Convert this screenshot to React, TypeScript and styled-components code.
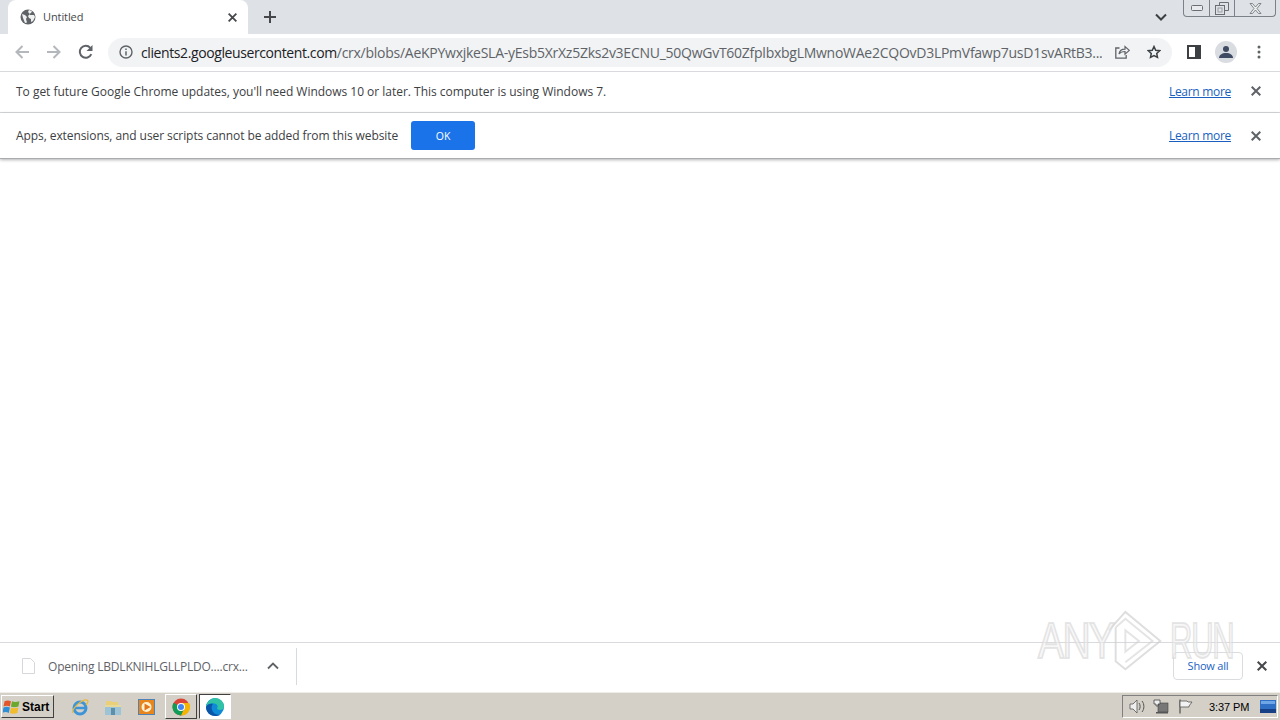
import React from "react";
import styled, { createGlobalStyle } from "styled-components";

const Global = createGlobalStyle`
  html, body { margin: 0; padding: 0; height: 100%; background: #fff; overflow: hidden; }
  #root { height: 100%; }
  * { box-sizing: border-box; }
`;

const Screen = styled.div`
  position: relative;
  width: 1280px;
  height: 720px;
  display: flex;
  flex-direction: column;
  font-family: "Open Sans", "Liberation Sans", sans-serif;
  color: #3c4043;
  overflow: hidden;
`;

const TabStrip = styled.div`
  position: relative;
  height: 34px;
  flex: none;
  background: #dee1e6;
  display: flex;
  align-items: flex-end;
  padding-left: 8px;
`;

const Tab = styled.div`
  width: 240px;
  height: 34px;
  background: #fff;
  border-radius: 8px 8px 0 0;
  display: flex;
  align-items: center;
  padding: 0 11px 0 12px;
  font-size: 11px;
  color: #45474a;
`;

const TabTitle = styled.span`
  margin-left: 7px;
  margin-bottom: 2px;
  flex: 1;
  letter-spacing: -0.1px;
`;

const NewTab = styled.div`
  margin-left: 15px;
  height: 34px;
  display: flex;
  align-items: center;
`;

const TabSearch = styled.div`
  margin-left: auto;
  margin-right: 113px;
  height: 34px;
  display: flex;
  align-items: center;
`;

const WindowButtons = styled.div`
  position: absolute;
  top: 0;
  right: 4px;
  width: 93px;
  height: 17px;
  display: flex;
  border: 1px solid #7c8087;
  border-top: none;
  border-radius: 0 0 4px 4px;
  background: #dee1e6;
`;

const WindowButton = styled.div<{ $w: number }>`
  width: ${(p) => p.$w}px;
  display: flex;
  align-items: center;
  justify-content: center;
  & + & { border-left: 1px solid #7c8087; }
`;

const Toolbar = styled.div`
  height: 38px;
  flex: none;
  background: #fff;
  border-bottom: 1px solid #d8dadd;
  display: flex;
  align-items: center;
  padding: 0 19px 1px 14px;
`;

const NavButton = styled.div<{ $gap?: number }>`
  width: 16px;
  height: 16px;
  margin-right: ${(p) => p.$gap ?? 16}px;
  display: flex;
  align-items: center;
  justify-content: center;
`;

const Omnibox = styled.div`
  width: 1064px;
  height: 29px;
  margin-left: 14px;
  border-radius: 15px;
  background: #f1f3f4;
  display: flex;
  align-items: center;
  padding: 0 11px 0 11px;
`;

const Url = styled.div`
  margin-left: 8px;
  width: 961px;
  font-size: 14px;
  white-space: nowrap;
  overflow: hidden;
  color: #5f6368;
  letter-spacing: -0.26px;
`;

const Host = styled.span`
  color: #202124;
  letter-spacing: -0.4px;
`;

const OmniIcon = styled.div<{ $left: number }>`
  margin-left: ${(p) => p.$left}px;
  display: flex;
`;

const ToolRight = styled.div`
  margin-left: 15px;
  flex: 1;
  display: flex;
  align-items: center;
`;

const Avatar = styled.div`
  width: 22px;
  height: 22px;
  margin-left: 14px;
  margin-right: 20px;
  border-radius: 50%;
  background: #d9dce1;
  display: flex;
  align-items: center;
  justify-content: center;
`;

const InfoBar = styled.div<{ $h: number; $last?: boolean }>`
  height: ${(p) => p.$h}px;
  flex: none;
  background: #fff;
  display: flex;
  align-items: center;
  padding: ${(p) => (p.$last ? "0 19px 0 16px" : "0 19px 2px 16px")};
  font-size: 12px;
  color: #3c4043;
  border-bottom: ${(p) => (p.$last ? "1px solid #a9abad" : "1px solid #d8dadd")};
  box-shadow: ${(p) => (p.$last ? "0 1px 3px rgba(0,0,0,.3)" : "none")};
  position: relative;
  z-index: ${(p) => (p.$last ? 1 : 0)};
`;

const InfoText = styled.span<{ $ls: number }>`
  letter-spacing: ${(p) => p.$ls}px;
`;

const OkButton = styled.div`
  margin-left: 13px;
  width: 64px;
  height: 29px;
  border-radius: 3px;
  background: #1a73e8;
  color: #fff;
  font-size: 10.5px;
  display: flex;
  align-items: center;
  justify-content: center;
`;

const LearnMore = styled.a`
  margin-left: auto;
  margin-right: 20px;
  color: #1a5fc0;
  text-decoration: underline;
  font-size: 12px;
  letter-spacing: -0.3px;
`;

const Content = styled.div`
  flex: 1;
  background: #fff;
`;

const Shelf = styled.div`
  height: 50px;
  flex: none;
  background: #fff;
  border-top: 1px solid #d8dadd;
  display: flex;
  align-items: center;
  padding: 0 13px 3px 21px;
`;

const FileName = styled.span`
  margin-left: 12px;
  width: 219px;
  font-size: 12px;
  color: #5f6368;
  letter-spacing: -0.2px;
`;

const ShelfDivider = styled.div`
  margin-left: 17px;
  width: 1px;
  height: 37px;
  background: #d8dadd;
`;

const ShowAll = styled.div`
  margin-left: auto;
  width: 70px;
  height: 28px;
  padding-bottom: 2px;
  border: 1px solid #dadce0;
  border-radius: 4px;
  background: #fff;
  color: #1a62c4;
  font-size: 11px;
  letter-spacing: -0.2px;
  display: flex;
  align-items: center;
  justify-content: center;
  position: relative;
  z-index: 1;
`;

const ShelfClose = styled.div`
  margin-left: 14px;
  display: flex;
`;

const Taskbar = styled.div`
  height: 28px;
  flex: none;
  background: #d4d0c8;
  border-top: 1px solid #efede8;
  display: flex;
  align-items: center;
  padding-left: 1px;
`;

const StartButton = styled.div`
  width: 53px;
  height: 23px;
  background: #d4d0c8;
  border: 1px solid;
  border-color: #fff #404040 #404040 #fff;
  display: flex;
  align-items: center;
  padding-left: 1px;
  font-family: "Liberation Sans", sans-serif;
  font-size: 12px;
  font-weight: 700;
  color: #000;
`;

const StartLabel = styled.span`
  margin-left: 1px;
`;

const QuickIcon = styled.div<{ $left: number }>`
  margin-left: ${(p) => p.$left}px;
  width: 18px;
  height: 18px;
  display: flex;
`;

const TaskButton = styled.div<{ $active?: boolean; $left: number }>`
  margin-left: ${(p) => p.$left}px;
  width: 32px;
  height: 25px;
  display: flex;
  align-items: center;
  justify-content: center;
  background: ${(p) => (p.$active ? "#fff" : "#d4d0c8")};
  border: 1px solid;
  border-color: ${(p) =>
    p.$active ? "#404040 #fff #fff #404040" : "#fff #404040 #404040 #fff"};
`;

const Tray = styled.div`
  margin-left: auto;
  margin-right: 2px;
  width: 156px;
  height: 23px;
  border: 1px solid;
  border-color: #808080 #fff #fff #808080;
  display: flex;
  align-items: center;
  padding-left: 6px;
`;

const Clock = styled.span`
  margin-left: 16px;
  font-family: "Liberation Sans", sans-serif;
  font-size: 11px;
  color: #000;
  width: 51px;
  letter-spacing: -0.1px;
`;

const TrayIcon = styled.div<{ $left?: number }>`
  margin-left: ${(p) => p.$left ?? 0}px;
  display: flex;
`;

const Watermark = styled.div`
  position: absolute;
  left: 1038px;
  top: 608px;
  width: 200px;
  height: 66px;
  display: flex;
  align-items: center;
  pointer-events: none;
  z-index: 2;
`;

const WatermarkWord = styled.span<{ $w: number; $scale: number }>`
  width: ${(p) => p.$w}px;
  font-family: "Liberation Sans", sans-serif;
  font-size: 50px;
  line-height: 66px;
  letter-spacing: -2px;
  color: rgba(240, 240, 240, 0.55);
  -webkit-text-stroke: 2px rgba(215, 215, 215, 0.65);
  transform: scaleX(${(p) => p.$scale});
  transform-origin: left center;
  white-space: nowrap;
`;

const Close = ({ size = 10, color = "#5f6368", w = 2 }: { size?: number; color?: string; w?: number }) => (
  <svg width={size} height={size} viewBox="0 0 10 10">
    <path d="M.7.7l8.6 8.6M9.3.7L.7 9.3" stroke={color} strokeWidth={w} fill="none" />
  </svg>
);

const Arrow = ({ flip }: { flip?: boolean }) => (
  <svg width="16" height="16" viewBox="0 0 16 16" style={flip ? { transform: "scaleX(-1)" } : undefined}>
    <path d="M15 8H2.500M8.500 2L2.500 8l6 6" stroke="#b4b7bb" strokeWidth="2" fill="none" />
  </svg>
);

const Globe = () => (
  <svg width="16" height="16" viewBox="0 0 16 16">
    <circle cx="8" cy="8" r="7.500" fill="#5f6368" />
    <path d="M2 5l3 1 2 2-1 2 1 3.500L5 14 3 9zM9 1l3 1-1 2-2 1 1 1 4 0 1 2-2 4-2 1 0-3-2-1-1-2 2-2-2-2z" fill="#fff" opacity=".9" />
  </svg>
);

const Chrome = () => (
  <svg width="18" height="18" viewBox="0 0 18 18">
    <circle cx="9" cy="9" r="8.500" fill="#db4437" />
    <path d="M9 9L1.600 4.800A8.500 8.500 0 0 0 9 17.500l4-8z" fill="#0f9d58" />
    <path d="M9 5h8a8.500 8.500 0 0 1-8 12.500L13 9z" fill="#f4b400" />
    <circle cx="9" cy="9" r="4" fill="#fff" />
    <circle cx="9" cy="9" r="3" fill="#4285f4" />
  </svg>
);

const Edge = () => (
  <svg width="20" height="20" viewBox="0 0 20 20">
    <circle cx="10" cy="10" r="9" fill="#0f8ad6" />
    <path d="M1 10C2 3 8 1 10 1c5 0 9 4 9 8 0 3-2 4-4 4s-3-1-3-2c1-1 1-3-1-4C8 5.500 3 6 1 10z" fill="#2fc2a4" />
    <path d="M1 10c1-3 5-4 7-3-2 2-2 6 1 9 2 2 5 2 7 1-2 2-4 2-6 2-5 0-9-4-9-9z" fill="#0a55a8" />
  </svg>
);

const Flag = () => (
  <svg width="15" height="15" viewBox="0 0 15 15">
    <path d="M2 .5v14" stroke="#333" fill="none" />
    <path d="M2 2h7l1 1h4l-3 4 0 1H2z" fill="#f2f2f2" stroke="#555" strokeWidth=".8" />
  </svg>
);

export default function App() {
  return (
    <Screen>
      <Global />
      <TabStrip>
        <Tab>
          <Globe />
          <TabTitle>Untitled</TabTitle>
          <Close size={9} color="#45474a" />
        </Tab>
        <NewTab>
          <svg width="14" height="14" viewBox="0 0 14 14">
            <path d="M7 1v12M1 7h12" stroke="#45474a" strokeWidth="2" />
          </svg>
        </NewTab>
        <TabSearch>
          <svg width="12" height="8" viewBox="0 0 12 8">
            <path d="M1 1.500l5 5 5-5" stroke="#3c4043" strokeWidth="2" fill="none" />
          </svg>
        </TabSearch>
        <WindowButtons>
          <WindowButton $w={25}>
            <svg width="12" height="6" viewBox="0 0 12 6">
              <rect x=".5" y=".5" width="11" height="5" rx="1" fill="#e8eaed" stroke="#6a6d72" />
            </svg>
          </WindowButton>
          <WindowButton $w={25}>
            <svg width="14" height="13" viewBox="0 0 14 13">
              <path d="M4.500 3V.5h9v8H10" fill="none" stroke="#6a6d72" />
              <rect x=".5" y="3.500" width="9" height="9" fill="none" stroke="#6a6d72" />
              <rect x="3" y="6" width="4" height="4" fill="none" stroke="#9a9da1" />
            </svg>
          </WindowButton>
          <WindowButton $w={41}>
            <svg width="13" height="11" viewBox="0 0 13 11">
              <path d="M1 .5h2.500L6.500 4l3-3.500H12L8 5.500l4 5H9.500l-3-3.500-3 3.500H1l4-5z" fill="#eceef0" stroke="#6a6d72" strokeWidth=".8" />
            </svg>
          </WindowButton>
        </WindowButtons>
      </TabStrip>

      <Toolbar>
        <NavButton><Arrow /></NavButton>
        <NavButton><Arrow flip /></NavButton>
        <NavButton $gap={0}>
          <svg width="16" height="16" viewBox="0 0 16 16">
            <path d="M13.300 10.200A6 6 0 1 1 12.300 3.800" stroke="#5f6368" strokeWidth="2" fill="none" />
            <path d="M14.500 1v6h-6z" fill="#5f6368" />
          </svg>
        </NavButton>
        <Omnibox>
          <svg width="14" height="14" viewBox="0 0 14 14">
            <circle cx="7" cy="7" r="6" fill="none" stroke="#5f6368" strokeWidth="1.400" />
            <path d="M7 6.200v4.300M7 3.400v1.600" stroke="#5f6368" strokeWidth="1.500" />
          </svg>
          <Url>
            <Host>clients2.googleusercontent.com</Host>
            /crx/blobs/AeKPYwxjkeSLA-yEsb5XrXz5Zks2v3ECNU_50QwGvT60ZfplbxbgLMwnoWAe2CQOvD3LPmVfawp7usD1svARtB3...
          </Url>
          <OmniIcon $left={13}>
            <svg width="15" height="14" viewBox="0 0 15 14">
              <path d="M4.500 3H.8v10.200h10.400V10" fill="none" stroke="#5f6368" strokeWidth="1.300" />
              <path d="M4 9c.5-3 3-4.800 6-4.800V1.500l4.300 3.900L10 9.200V6.500C8 6.500 5.500 7 4 9z" fill="none" stroke="#5f6368" strokeWidth="1.200" />
            </svg>
          </OmniIcon>
          <OmniIcon $left={17}>
            <svg width="14" height="14" viewBox="0 0 14 14">
              <path d="M7 1.500l1.700 3.700 4 .5-3 2.700.8 4L7 10.500l-3.500 1.900.8-4-3-2.700 4-.5z" fill="none" stroke="#3c4043" strokeWidth="1.500" />
            </svg>
          </OmniIcon>
        </Omnibox>
        <ToolRight>
          <svg width="14" height="14" viewBox="0 0 14 14">
            <path d="M0 0h14v14H0z" fill="#3c4043" />
            <path d="M2 2h6v10H2z" fill="#fff" />
          </svg>
          <Avatar>
            <svg width="14" height="12" viewBox="0 0 14 12">
              <circle cx="7" cy="3" r="3" fill="#3f4b63" />
              <path d="M0 12c0-3 3-5 7-5s7 2 7 5z" fill="#3f4b63" />
            </svg>
          </Avatar>
          <svg width="4" height="14" viewBox="0 0 4 14">
            <circle cx="2" cy="2" r="1.500" fill="#5f6368" />
            <circle cx="2" cy="7" r="1.500" fill="#5f6368" />
            <circle cx="2" cy="12" r="1.500" fill="#5f6368" />
          </svg>
        </ToolRight>
      </Toolbar>

      <InfoBar $h={41}>
        <InfoText $ls={-0.02}>To get future Google Chrome updates, you'll need Windows 10 or later. This computer is using Windows 7.</InfoText>
        <LearnMore>Learn more</LearnMore>
        <Close />
      </InfoBar>
      <InfoBar $h={46} $last>
        <InfoText $ls={-0.08}>Apps, extensions, and user scripts cannot be added from this website</InfoText>
        <OkButton>OK</OkButton>
        <LearnMore>Learn more</LearnMore>
        <Close />
      </InfoBar>

      <Content />

      <Shelf>
        <svg width="15" height="16" viewBox="0 0 15 16">
          <path d="M1.500.500h8l4 4v11h-12z" fill="#fff" stroke="#d5d7da" />
        </svg>
        <FileName>Opening LBDLKNIHLGLLPLDO....crx...</FileName>
        <svg width="12" height="8" viewBox="0 0 12 8">
          <path d="M1 6.500l5-5 5 5" stroke="#5f6368" strokeWidth="1.800" fill="none" />
        </svg>
        <ShelfDivider />
        <ShowAll>Show all</ShowAll>
        <ShelfClose><Close color="#45474a" /></ShelfClose>
      </Shelf>

      <Taskbar>
        <StartButton>
          <svg width="18" height="17" viewBox="0 0 16 16">
            <path d="M1 3c2-1 4-1 6 0L6 8C4 7 2 7 0 8z" fill="#e2562b" />
            <path d="M8 3c2 1 4 1 7 0l-1 5c-3 1-5 1-7 0z" fill="#6aa82e" />
            <path d="M0 9c2-1 4-1 6 0l-1 5c-2-1-4-1-6 0z" fill="#2d8fd8" />
            <path d="M7 9c2 1 4 1 7 0l-1 5c-3 1-5 1-7 0z" fill="#f2bb2c" />
          </svg>
          <StartLabel>Start</StartLabel>
        </StartButton>
        <QuickIcon $left={17}>
          <svg width="18" height="18" viewBox="0 0 18 18">
            <circle cx="9" cy="10" r="6" fill="none" stroke="#3d95d8" strokeWidth="3" />
            <path d="M4 10h10" stroke="#3d95d8" strokeWidth="2.500" />
            <path d="M2 15C0 11 11 1 16 2c2 1 0 4-1 5" fill="none" stroke="#e8b93a" strokeWidth="1.300" />
          </svg>
        </QuickIcon>
        <QuickIcon $left={15}>
          <svg width="18" height="18" viewBox="0 0 18 18">
            <path d="M2 3h5l1 1h6v4H2z" fill="#e8cf78" />
            <path d="M1 7h16v10H1z" fill="#9cc4d6" />
            <path d="M7 10h4v7H7z" fill="#5e8fa8" />
            <path d="M1 7h16v2H1z" fill="#e6d99a" />
          </svg>
        </QuickIcon>
        <QuickIcon $left={16}>
          <svg width="18" height="18" viewBox="0 0 18 18">
            <rect x=".5" y="1.500" width="16" height="15" fill="#e8861e" stroke="#4f82b6" />
            <circle cx="8.500" cy="9" r="5" fill="#fff2d0" />
            <path d="M6.500 5.500v7l6-3.500z" fill="#e2741a" />
          </svg>
        </QuickIcon>
        <TaskButton $left={9}><Chrome /></TaskButton>
        <TaskButton $active $left={2}><Edge /></TaskButton>
        <Tray>
          <TrayIcon>
            <svg width="17" height="15" viewBox="0 0 17 15">
              <path d="M1 5h3l4-4v13l-4-4H1z" fill="#eee" stroke="#555" strokeWidth=".8" />
              <path d="M10 4c1.500 2 1.500 5 0 7M13 2c2.500 3 2.500 8 0 11" stroke="#555" fill="none" />
            </svg>
          </TrayIcon>
          <TrayIcon $left={7}>
            <svg width="16" height="15" viewBox="0 0 16 15">
              <rect x="5" y="4" width="10" height="9" fill="#777" stroke="#444" strokeWidth=".6" />
              <path d="M1 1h6v4H5v2H3V5H1z" fill="#eee" stroke="#444" strokeWidth=".8" />
              <path d="M3 13h12v1.500H3z" fill="#555" />
            </svg>
          </TrayIcon>
          <TrayIcon $left={9}><Flag /></TrayIcon>
          <Clock>3:37 PM</Clock>
          <TrayIcon>
            <svg width="16" height="13" viewBox="0 0 16 13">
              <rect width="16" height="13" fill="#2f6fc4" />
              <rect y="9" width="16" height="4" fill="#173f86" />
              <rect x="1" y="1" width="14" height="3" fill="#6fa6e6" />
            </svg>
          </TrayIcon>
        </Tray>
      </Taskbar>

      <Watermark>
        <WatermarkWord $w={66} $scale={0.78}>ANY</WatermarkWord>
        <svg width="66" height="66" viewBox="0 0 68 66" fill="none">
          <path d="M5 22L22 3l36 30-36 29-10-8V19" stroke="rgba(205,205,205,.65)" strokeWidth="2" />
          <path d="M12 19l10-9 28 23-28 22" stroke="rgba(205,205,205,.55)" strokeWidth="2" />
          <path d="M22 22l14 11-14 11z" stroke="rgba(205,205,205,.55)" strokeWidth="2" />
        </svg>
        <WatermarkWord $w={62} $scale={0.62}>RUN</WatermarkWord>
      </Watermark>
    </Screen>
  );
}
